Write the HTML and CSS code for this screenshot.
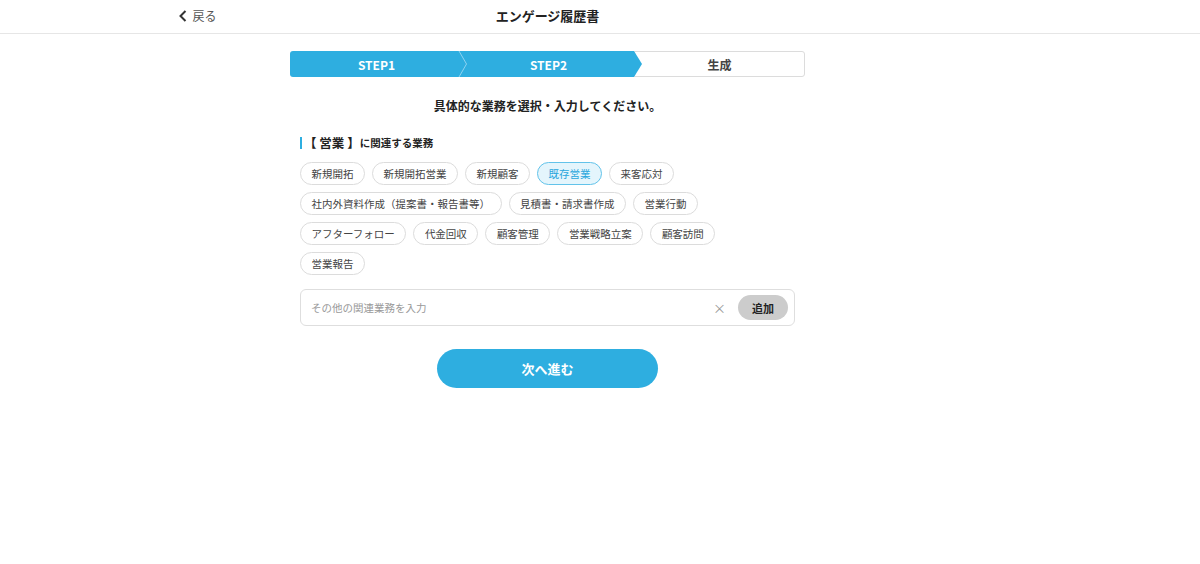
FILE: index.html
```html
<!DOCTYPE html>
<html lang="ja">
<head>
<meta charset="utf-8">
<title>エンゲージ履歴書</title>
<link rel="stylesheet" href="styles.css">
</head>
<body>
<div class="page">
  <header class="header">
    <div class="header-inner">
      <a class="back" href="#">
        <svg class="back-icon" width="10" height="12" viewBox="0 0 10 12"><polyline points="7.5,1 2.5,6 7.5,11" fill="none" stroke="#333" stroke-width="2"/></svg>
        <span>戻る</span>
      </a>
      <h1 class="title">エンゲージ履歴書</h1>
      <div></div>
    </div>
  </header>

  <main class="main">
    <div class="steps">
      <div class="step step-done">STEP1
        <svg class="sep" width="10" height="26" viewBox="0 0 10 26"><polyline points="1,0 8.5,13 1,26" fill="none" stroke="#8fd3f0" stroke-width="1"/></svg>
      </div>
      <div class="step step-current">STEP2</div>
      <div class="step step-todo">生成</div>
    </div>

    <p class="lead">具体的な業務を選択・入力してください。</p>

    <section class="section">
      <h2 class="section-title"><span class="big">【 営業 】</span>に関連する業務</h2>
      <div class="chips">
        <span class="chip">新規開拓</span>
        <span class="chip">新規開拓営業</span>
        <span class="chip">新規顧客</span>
        <span class="chip chip-on">既存営業</span>
        <span class="chip">来客応対</span>
        <span class="chip">社内外資料作成（提案書・報告書等）</span>
        <span class="chip">見積書・請求書作成</span>
        <span class="chip">営業行動</span>
        <span class="chip">アフターフォロー</span>
        <span class="chip">代金回収</span>
        <span class="chip">顧客管理</span>
        <span class="chip">営業戦略立案</span>
        <span class="chip">顧客訪問</span>
        <span class="chip">営業報告</span>
      </div>

      <div class="input-box">
        <span class="placeholder">その他の関連業務を入力</span>
        <span class="clear">×</span>
        <button class="add">追加</button>
      </div>
    </section>

    <div class="next-wrap">
      <button class="next">次へ進む</button>
    </div>
  </main>
</div>
</body>
</html>
```

FILE: styles.css
```css
* { box-sizing: border-box; }
html, body { margin: 0; padding: 0; background: #fff; }
body {
  font-family: "Noto Sans CJK JP", "Noto Sans", sans-serif;
  color: #333;
}
.page { width: 1095px; }

.header {
  border-bottom: 1px solid #e6e6e6;
  margin-right: -105px;
  padding-right: 105px;
}
.header-inner {
  width: 740px;
  margin: 0 auto;
  height: 33px;
  padding-bottom: 2px;
  display: grid;
  grid-template-columns: 1fr auto 1fr;
  align-items: center;
}
.back {
  display: flex;
  align-items: center;
  gap: 5px;
  color: #555;
  text-decoration: none;
  font-size: 12px;
}
.back-icon { display: block; }
.title {
  margin: 0;
  font-size: 13px;
  font-weight: 700;
  color: #222;
  text-align: center;
}

.main { width: 515px; margin: 0 auto; }

.steps {
  margin-top: 17px;
  display: flex;
  height: 26px;
}
.step {
  display: flex;
  align-items: center;
  justify-content: center;
  font-size: 12px;
  font-weight: 700;
  position: relative;
}
.step-done {
  flex: 0 0 173px;
  background: #2eaee0;
  color: #fff;
  border-radius: 3px 0 0 3px;
}
.sep { position: absolute; right: -5px; top: 0; z-index: 2; }
.step-current {
  flex: 0 0 179px;
  background: #2eaee0;
  color: #fff;
  margin-right: -8px;
  padding-right: 8px;
  z-index: 1;
  clip-path: polygon(0 0, calc(100% - 8px) 0, 100% 50%, calc(100% - 8px) 100%, 0 100%);
}
.step-todo {
  flex: 1;
  background: #fff;
  color: #444;
  border: 1px solid #dcdcdc;
  border-radius: 0 3px 3px 0;
}

.lead {
  margin: 20px 0 0;
  text-align: center;
  font-size: 12px;
  font-weight: 700;
  line-height: 18px;
  color: #222;
}

.section { padding: 0 10px; }
.section-title {
  margin: 22px 0 0;
  border-left: 2px solid #2eaee0;
  font-size: 10.5px;
  font-weight: 700;
  line-height: 12px;
  color: #222;
  display: flex;
  align-items: center;
}
.section-title .big { font-size: 12.5px; margin-left: 2px; }

.chips {
  margin-top: 13px;
  max-width: 480px;
  display: flex;
  flex-wrap: wrap;
  gap: 7px 7px;
}
.chip {
  display: inline-flex;
  align-items: center;
  height: 23px;
  padding: 0 10.5px;
  border: 1px solid #dcdcdc;
  border-radius: 12px;
  font-size: 10.5px;
  color: #444;
  background: #fff;
  white-space: nowrap;
}
.chip-on {
  background: #e4f5fc;
  border-color: #62c3ea;
  color: #2aa6dc;
}

.input-box {
  margin-top: 14px;
  height: 37px;
  border: 1px solid #dedede;
  border-radius: 6px;
  display: flex;
  align-items: center;
  padding: 0 6px 0 10px;
}
.placeholder {
  flex: 1;
  font-size: 10.5px;
  color: #999;
}
.clear {
  font-size: 13px;
  color: #999;
  margin-right: 12px;
}
.add {
  width: 50px;
  height: 25px;
  border: none;
  border-radius: 13px;
  background: #cccccc;
  color: #222;
  font-family: inherit;
  font-size: 11px;
  font-weight: 700;
  padding: 0;
}

.next-wrap {
  display: flex;
  justify-content: center;
  margin-top: 23px;
}
.next {
  width: 221px;
  height: 39px;
  border: none;
  border-radius: 20px;
  background: #2eaee0;
  color: #fff;
  font-family: inherit;
  font-size: 13px;
  font-weight: 700;
  padding: 0;
}
```
